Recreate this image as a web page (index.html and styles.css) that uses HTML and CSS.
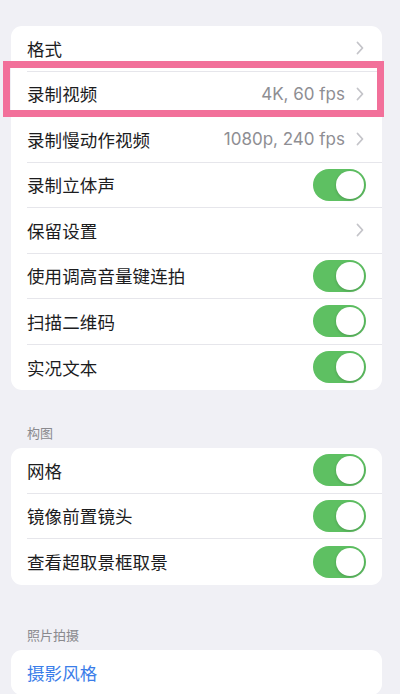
FILE: index.html
```html
<!DOCTYPE html>
<html lang="zh-CN">
<head>
    <meta charset="UTF-8">
    <meta name="viewport" content="width=device-width, initial-scale=1.0">
    <title>相机设置</title>
    <link rel="stylesheet" href="styles.css">
</head>
<body>
    <div class="card">
        <div class="row">
            <span class="label">格式</span>
            <span class="chevron"><svg width="8" height="14" viewBox="0 0 8 14"><path d="M1.5 1.5 L6.5 7 L1.5 12.5" /></svg></span>
        </div>
        <div class="row highlight">
            <span class="label">录制视频</span>
            <span class="value">4K, 60 fps</span>
            <span class="chevron"><svg width="8" height="14" viewBox="0 0 8 14"><path d="M1.5 1.5 L6.5 7 L1.5 12.5" /></svg></span>
        </div>
        <div class="row">
            <span class="label">录制慢动作视频</span>
            <span class="value">1080p, 240 fps</span>
            <span class="chevron"><svg width="8" height="14" viewBox="0 0 8 14"><path d="M1.5 1.5 L6.5 7 L1.5 12.5" /></svg></span>
        </div>
        <div class="row">
            <span class="label">录制立体声</span>
            <span class="toggle on"></span>
        </div>
        <div class="row">
            <span class="label">保留设置</span>
            <span class="chevron"><svg width="8" height="14" viewBox="0 0 8 14"><path d="M1.5 1.5 L6.5 7 L1.5 12.5" /></svg></span>
        </div>
        <div class="row">
            <span class="label">使用调高音量键连拍</span>
            <span class="toggle on"></span>
        </div>
        <div class="row">
            <span class="label">扫描二维码</span>
            <span class="toggle on"></span>
        </div>
        <div class="row">
            <span class="label">实况文本</span>
            <span class="toggle on"></span>
        </div>
    </div>

    <div class="section-title first">构图</div>
    <div class="card">
        <div class="row">
            <span class="label">网格</span>
            <span class="toggle on"></span>
        </div>
        <div class="row">
            <span class="label">镜像前置镜头</span>
            <span class="toggle on"></span>
        </div>
        <div class="row">
            <span class="label">查看超取景框取景</span>
            <span class="toggle on"></span>
        </div>
    </div>

    <div class="section-title">照片拍摄</div>
    <div class="card">
        <div class="row">
            <span class="label link">摄影风格</span>
        </div>
    </div>
</body>
</html>
```

FILE: styles.css
```css
body {
    margin: 0;
    padding: 26px 18px 0 11px;
    background-color: #f0f0f5;
    font-family: Inter, "Noto Sans CJK SC", sans-serif;
    color: #1c1c1e;
    overflow: hidden;
}
.card {
    background-color: #fff;
    border-radius: 11px;
}
.row {
    display: flex;
    align-items: center;
    height: 45.5px;
    box-sizing: border-box;
    margin-left: 16px;
    padding-right: 16px;
    border-bottom: 1px solid #e6e6eb;
}
.row:last-child {
    border-bottom: none;
}
.label {
    flex: 1;
    font-size: 17.5px;
    letter-spacing: 0.1px;
}
.link {
    color: #3a7de9;
}
.value {
    font-size: 17px;
    color: #8e8e93;
    margin-right: 11px;
}
.chevron {
    display: flex;
    margin-right: 2px;
}
.chevron path {
    fill: none;
    stroke: #c4c4c9;
    stroke-width: 1.8;
    stroke-linecap: round;
    stroke-linejoin: round;
}
.toggle {
    position: relative;
    width: 53px;
    height: 32px;
    border-radius: 16px;
    background-color: #e9e9ea;
}
.toggle.on {
    background-color: #5ec062;
}
.toggle::after {
    content: "";
    position: absolute;
    top: 2px;
    left: 2px;
    width: 28px;
    height: 28px;
    border-radius: 50%;
    background-color: #fff;
    box-shadow: 0 1px 3px rgba(0, 0, 0, 0.2);
}
.toggle.on::after {
    left: 23px;
}
.highlight {
    position: relative;
}
.highlight::after {
    content: "";
    position: absolute;
    left: -24px;
    right: -2px;
    top: -11px;
    bottom: -1px;
    border: 7px solid #f2709a;
}
.section-title {
    font-family: "Noto Sans CJK SC", sans-serif;
    font-size: 13px;
    line-height: 16px;
    color: #8a8a8e;
    padding-left: 16px;
    margin: 42px 0 7px;
}
.section-title.first {
    margin-top: 35px;
}
```
